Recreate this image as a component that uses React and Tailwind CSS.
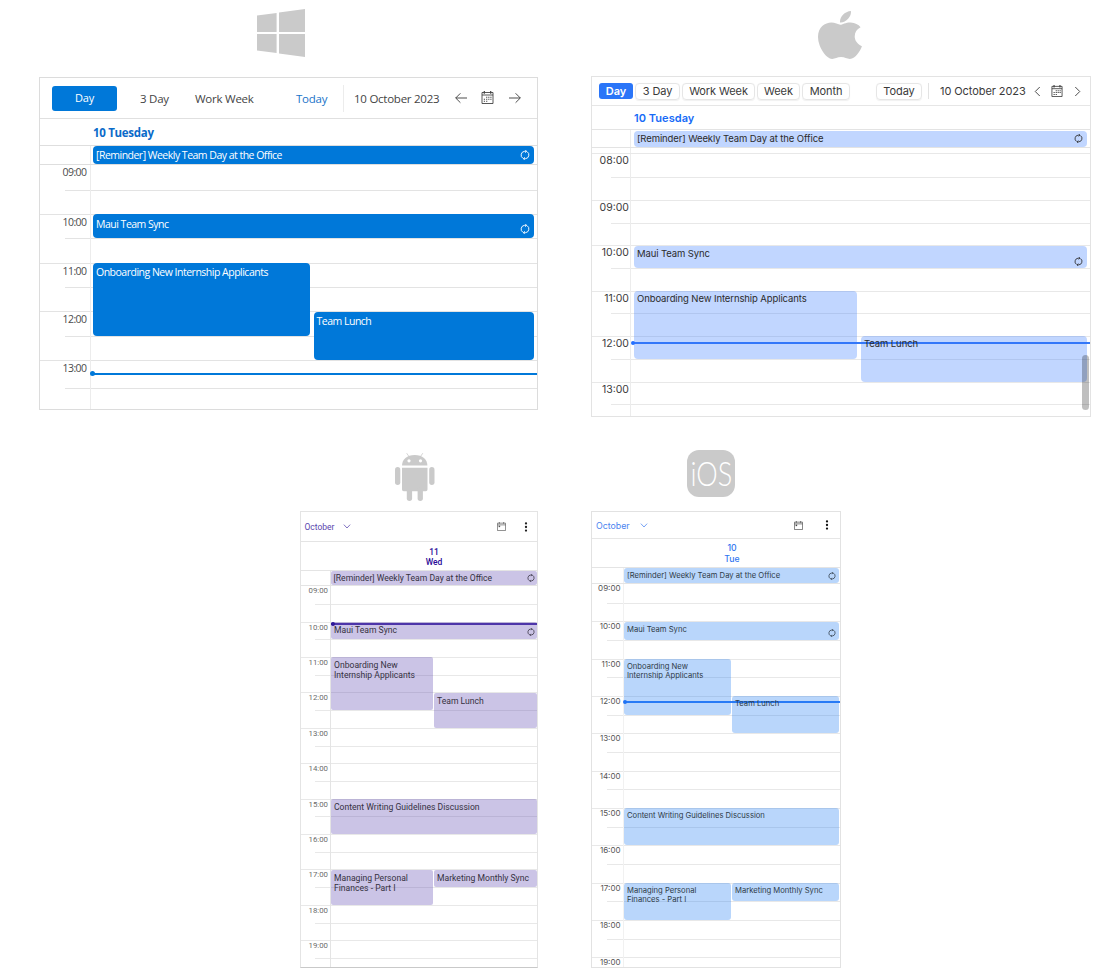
import React from "react";

const REMINDER = "[Reminder] Weekly Team Day at the Office";

function RecurIcon({ className }) {
  return (
    <svg viewBox="0 0 10 10" fill="none" stroke="currentColor" strokeWidth="0.95" className={className}>
      <path d="M2.9 8.3A3.8 3.8 0 0 1 4.6 1.3H6.6M7.1 1.7A3.8 3.8 0 0 1 5.4 8.7H3.4" />
      <path d="M5.2 0L6.6 1.3 5.2 2.7M4.8 10L3.4 8.7 4.8 7.3" />
    </svg>
  );
}

function CalendarIcon({ className }) {
  return (
    <svg viewBox="0 0 12 13" fill="none" stroke="currentColor" className={className}>
      <path d="M.5 1.5h11v11H.5zM.5 4h11" strokeWidth="0.9" />
      <path d="M2.8 0v2.8M9.2 0v2.8" strokeWidth="1.2" />
      <path d="M4.6 6.2h1.2M6.7 6.2h1.2M8.8 6.2H10M2.3 8.2h1.2M4.6 8.2h1.2M6.7 8.2h1.2M8.8 8.2H10M2.3 10.2h1.2M4.6 10.2h1.2" strokeWidth="1.1" />
    </svg>
  );
}

function MonthIcon({ className }) {
  return (
    <svg viewBox="0 0 10 10" fill="none" stroke="currentColor" className={className}>
      <path d="M.5 1.3h9v8.2h-9zM.5 3.2h9" strokeWidth="0.75" />
      <path d="M2.6 0v2M7.4 0v2" strokeWidth="0.8" />
      <path d="M1.8 4h1.7v1.7H1.8z" fill="currentColor" stroke="none" />
    </svg>
  );
}

function Arrow({ className, flip }) {
  return (
    <svg viewBox="0 0 12 12" fill="none" stroke="currentColor" strokeWidth="0.95" className={className}>
      {flip ? <path d="M0 6h11.3M6.6 1.3L11.3 6l-4.7 4.7" /> : <path d="M12 6H.7M5.4 1.3L.7 6l4.7 4.7" />}
    </svg>
  );
}

function Chevron({ className, dir }) {
  const paths = { left: "M7.5 1L2.5 6l5 5", right: "M2.5 1l5 5-5 5", down: "M.8 3.5L5 8l4.2-4.5" };
  return (
    <svg viewBox="0 0 10 12" fill="none" stroke="currentColor" className={className}>
      <path d={paths[dir]} />
    </svg>
  );
}

function Dots({ className }) {
  return (
    <svg viewBox="0 0 4 10" fill="currentColor" className={className}>
      <circle cx="2" cy="1.4" r="1.15" />
      <circle cx="2" cy="5" r="1.15" />
      <circle cx="2" cy="8.6" r="1.15" />
    </svg>
  );
}

function Timeline({ hours, pitch, theme, events, now, lastHalf }) {
  const first = hours[0];
  const y = (h) => (h - first) * pitch;
  return (
    <div className="relative min-h-0 flex-1 overflow-hidden">
      {hours.map((h, i) => {
        const last = i === hours.length - 1;
        return (
          <div key={h} className="flex flex-col" style={{ height: pitch }}>
            <div
              className={`shrink-0 border-t ${i === 0 ? "-mt-px mb-px border-transparent" : theme.line}`}
              style={{ height: last && lastHalf ? lastHalf : pitch / 2 }}
            >
              <div className={theme.time}>{String(h).padStart(2, "0")}:00</div>
            </div>
            <div className={`flex-1 border-t ${theme.line} ${theme.half}`} />
          </div>
        );
      })}
      <div className={`absolute inset-y-0 right-0 border-l ${theme.rule} ${theme.body}`}>
        {now && (
          <div className={`absolute right-0 ${theme.now}`} style={{ top: y(now) - theme.nowSize / 2, height: theme.nowSize }}>
            <span className={theme.dot} />
          </div>
        )}
        {events.map((e) => (
          <div
            key={e.title}
            className={`absolute overflow-hidden ${theme.event} ${e.box}`}
            style={{ top: y(e.from) + 0.3, height: (e.to - e.from) * pitch - 0.3 }}
          >
            <div className={`${theme.title} ${e.text || ""}`}>{e.title}</div>
            {e.recurs && <RecurIcon className={theme.recur} />}
          </div>
        ))}
      </div>
    </div>
  );
}

const windowsTheme = {
  line: "border-[#e3e3e3]",
  rule: "border-[#ececec]",
  half: "ml-[25px]",
  body: "left-[50px]",
  time: "w-[46.5px] text-right text-[10.5px] leading-[14px] tracking-[-0.55px] text-[#4a4a4a]",
  now: "left-0 bg-[#0078d9]",
  nowSize: 2,
  dot: "absolute left-[-1px] top-[-1.5px] size-[5px] rounded-full bg-[#0078d9]",
  event: "rounded-[4px] bg-[#0078d9] text-white",
  title: "whitespace-nowrap pl-[3px] pt-[2.5px] text-[10.5px] leading-[15px] tracking-[-0.5px] font-medium",
  recur: "absolute bottom-[4px] right-[4px] size-[10px]",
};

const macTheme = {
  line: "border-[#e8e8e8]",
  rule: "border-[#ececec]",
  half: "ml-[19px]",
  body: "left-[38px]",
  time: "w-[37px] text-right text-[10.5px] leading-[13.5px] text-[#3c3c3c]",
  now: "left-[2px] bg-[#3478f6]",
  nowSize: 2,
  dot: "absolute left-[-2px] top-[-1px] size-[4px] rounded-full bg-[#2470ff]",
  event: "rounded-[4px] bg-[#3278ff]/30 text-[#2b2b2b]",
  title: "whitespace-nowrap pl-[3px] text-[9.5px] leading-[15px] tracking-[-0.1px]",
  recur: "absolute bottom-[2px] right-[4px] size-[9px]",
};

const androidTheme = {
  line: "border-[#e8e8e8]",
  rule: "border-[#e4e4e4]",
  half: "ml-[14px]",
  body: "left-[29px]",
  time: "w-[27px] text-right text-[7.8px] leading-[10px] text-[#6b6b6b]",
  now: "left-0 bg-[#4b33a8]",
  nowSize: 2,
  dot: "absolute left-0 top-[-1px] size-[4px] rounded-full bg-[#1f0a91]",
  event: "rounded-[2px] bg-[#523aac]/30 text-[#35313f]",
  title: "pl-[3px] pt-[3px] text-[8.6px] leading-[10px]",
  recur: "absolute bottom-[3px] right-[2px] size-[8px]",
};

const iosTheme = {
  line: "border-[#e8e8e8]",
  rule: "border-[#f1f1f1]",
  half: "ml-[15px]",
  body: "left-[31px]",
  time: "w-[28.5px] text-right text-[8px] leading-[9.5px] text-[#555]",
  now: "left-0 bg-[#2f7bf6]",
  nowSize: 2,
  dot: "absolute left-[-1px] top-[-1px] size-[4px] rounded-full bg-[#2272f5]",
  event: "rounded-[3px] bg-[#1676f2]/30 text-[#2f3b48]",
  title: "pl-[3px] pt-[2.9px] text-[7.65px] leading-[9px]",
  recur: "absolute bottom-[3px] right-[3px] size-[8px]",
};

function WindowsScheduler() {
  return (
    <section className="flex h-[333px] w-[499px] flex-col border border-[#dcdcdc] font-['Open_Sans',sans-serif]">
      <header className="flex h-[40px] shrink-0 items-center text-[11.5px] tracking-[-0.25px] text-[#444]">
        <button className="ml-[12px] h-[25px] w-[65px] rounded-[3px] bg-[#0078d9] pt-px text-[11px] font-medium text-white">Day</button>
        <span className="ml-[23px] w-[55px] pt-[1.5px]">3 Day</span>
        <span className="w-[101px] pt-[1.5px]">Work Week</span>
        <span className="w-[47px] pt-[1.5px] text-[#1a73c9]">Today</span>
        <span className="h-[27px] w-px bg-[#ececec]" />
        <span className="ml-[10px] w-[100.5px] whitespace-nowrap pt-[1.5px]">10 October 2023</span>
        <Arrow className="size-[12px]" />
        <CalendarIcon className="mb-[2px] ml-[14px] h-[13px] w-[13px]" />
        <Arrow className="ml-[15px] size-[12px]" flip />
      </header>
      <div className="h-[27px] shrink-0 border-t border-[#e0e0e0] pl-[53px] text-[11.5px] font-bold leading-[28px] tracking-[-0.3px] text-[#0b6bc9]">10 Tuesday</div>
      <div className="flex h-[20.3px] shrink-0 border-y border-[#dedede]">
        <div className="w-[50px]" />
        <div className="flex flex-1 items-center border-l border-[#ececec] pl-[2px] pr-[3px]">
          <div className="flex h-[18px] flex-1 items-center justify-between rounded-[4px] bg-[#0078d9] pl-[3px] pr-[4px] text-white">
            <span className="whitespace-nowrap pt-[2px] text-[10.5px] font-medium tracking-[-0.51px]">{REMINDER}</span>
            <RecurIcon className="size-[10px]" />
          </div>
        </div>
      </div>
      <Timeline
        hours={[9, 10, 11, 12, 13]}
        pitch={48.7}
        lastHalf={28}
        theme={windowsTheme}
        now={13.28}
        events={[
          { title: "Maui Team Sync", from: 10, to: 10.5, box: "left-[2px] right-[3px]", recurs: true },
          { title: "Onboarding New Internship Applicants", from: 11, to: 12.5, box: "left-[2px] w-[217px]" },
          { title: "Team Lunch", from: 12, to: 13, box: "left-[222.5px] right-[3px]" },
        ]}
      />
    </section>
  );
}

function MacScheduler() {
  const tab = "h-[17px] rounded-[4px] border border-[#e6e6e6] pt-px shadow-[0_0.5px_1px_rgba(0,0,0,0.06)]";
  return (
    <section className="relative flex h-[341px] w-[499.5px] flex-col border border-[#e3e3e3] font-[Inter,sans-serif]">
      <header className="flex h-[28px] shrink-0 items-center whitespace-nowrap text-[11px] leading-none tracking-[-0.08px] text-[#3a3a3a]">
        <button className="ml-[7px] h-[16px] w-[34px] rounded-[3px] bg-[#2a75f8] pt-px font-semibold text-white">Day</button>
        <button className={`${tab} ml-[2px] w-[45px]`}>3 Day</button>
        <button className={`${tab} ml-[2px] w-[73px]`}>Work Week</button>
        <button className={`${tab} ml-[2px] w-[43px]`}>Week</button>
        <button className={`${tab} ml-[2px] w-[48px]`}>Month</button>
        <button className={`${tab} ml-[26px] w-[46px]`}>Today</button>
        <span className="ml-[6px] h-[16px] w-px bg-[#e3e3e3]" />
        <span className="ml-[11px] w-[93px] pt-px">10 October 2023</span>
        <Chevron dir="left" className="h-[11px] w-[9px]" />
        <CalendarIcon className="ml-[9px] h-[12px] w-[12px]" />
        <Chevron dir="right" className="ml-[10px] h-[11px] w-[9px]" />
      </header>
      <div className="h-[24px] shrink-0 border-t border-[#e6e6e6] pl-[42px] text-[11px] font-semibold leading-[24px] tracking-[0.05px] text-[#176bf7]">10 Tuesday</div>
      <div className="flex h-[19px] shrink-0 border-y border-[#e3e3e3]">
        <div className="w-[38px]" />
        <div className="flex flex-1 items-center border-l border-[#ececec] pl-[3px] pr-[3px]">
          <div className="flex h-[16px] flex-1 items-center justify-between rounded-[4px] bg-[#c1d6ff] pl-[3px] pr-[4px] text-[#2b2b2b]">
            <span className="whitespace-nowrap pt-px text-[9.5px] tracking-[-0.1px]">{REMINDER}</span>
            <RecurIcon className="size-[9px]" />
          </div>
        </div>
      </div>
      <div className="flex h-[6.4px] shrink-0 border-b border-[#e8e8e8]">
        <div className="w-[38px]" />
        <div className="border-l border-[#ececec]" />
      </div>
      <Timeline
        hours={[8, 9, 10, 11, 12, 13]}
        pitch={45.45}
        theme={macTheme}
        now={12.14}
        events={[
          { title: "Maui Team Sync", from: 10, to: 10.5, box: "left-[3px] right-[3px]", recurs: true },
          { title: "Onboarding New Internship Applicants", from: 11, to: 12.5, box: "left-[3px] w-[223px]" },
          { title: "Team Lunch", from: 12, to: 13, box: "left-[230px] right-[3px]" },
        ]}
      />
      <div className="absolute bottom-[6px] right-px h-[55px] w-[7px] rounded-full bg-black/25" />
    </section>
  );
}

const phoneEvents = (full, left, right) => [
  { title: "Maui Team Sync", from: 10, to: 10.5, box: full, recurs: true },
  { title: "Onboarding New Internship Applicants", from: 11, to: 12.5, box: left, text: "w-[96px]" },
  { title: "Team Lunch", from: 12, to: 13, box: right },
  { title: "Content Writing Guidelines Discussion", from: 15, to: 16, box: full },
  { title: "Managing Personal Finances - Part I", from: 17, to: 18, box: left, text: "w-[92px]" },
  { title: "Marketing Monthly Sync", from: 17, to: 17.5, box: right },
];
const phoneHours = [9, 10, 11, 12, 13, 14, 15, 16, 17, 18, 19];

function AndroidScheduler() {
  return (
    <section className="flex h-[457px] w-[238px] flex-col border border-b-[#c9c9c9] border-l-[#e4e4e4] border-r-[#e4e4e4] border-t-[#e4e4e4] font-[Roboto,sans-serif]">
      <header className="flex h-[29px] shrink-0 items-center text-[8.5px] text-[#5a45ae]">
        <span className="ml-[3.5px] w-[38px] pt-px">October</span>
        <Chevron dir="down" className="h-[9px] w-[8px]" />
        <MonthIcon className="ml-[146.5px] size-[9px] text-[#555]" />
        <Dots className="ml-[18px] h-[10px] w-[4px] text-[#222]" />
      </header>
      <div className="flex h-[29px] shrink-0 flex-col justify-center border-t border-[#e4e4e4] pl-[30px] pt-px text-center text-[8.5px] font-medium leading-[10px] text-[#2b0b98]">
        <span>11</span>
        <span>Wed</span>
      </div>
      <div className="flex h-[16.3px] shrink-0 border-y border-[#e4e4e4]">
        <div className="w-[29px]" />
        <div className="flex flex-1 items-center border-l border-[#e4e4e4] pr-[0.5px]">
          <div className="flex h-[14.5px] flex-1 items-center justify-between rounded-[2px] bg-[#cbc4e6] pl-[2.5px] pr-[2px] text-[#35313f]">
            <span className="whitespace-nowrap pt-[1.5px] text-[8.6px]">{REMINDER}</span>
            <RecurIcon className="size-[8px]" />
          </div>
        </div>
      </div>
      <Timeline
        hours={phoneHours}
        pitch={35.4}
        theme={androidTheme}
        now={10.06}
        events={phoneEvents("left-0 right-[0.5px]", "left-0 w-[102px]", "left-[103px] right-[0.5px]")}
      />
    </section>
  );
}

function IosScheduler() {
  return (
    <section className="flex h-[457px] w-[250px] flex-col border border-[#e2e2e2] font-[Inter,sans-serif]">
      <header className="flex h-[26px] shrink-0 items-center text-[8.8px] text-[#4b84f0]">
        <span className="ml-[4px] w-[44px] pt-[1.5px]">October</span>
        <Chevron dir="down" className="h-[9px] w-[8px]" />
        <MonthIcon className="ml-[146px] size-[9px] text-[#444]" />
        <Dots className="ml-[22px] h-[10px] w-[4px] text-[#111]" />
      </header>
      <div className="flex h-[29px] shrink-0 flex-col justify-center border-t border-[#e6e6e6] pl-[32px] pt-px text-center text-[8.7px] font-medium leading-[11px] text-[#2f76f0]">
        <span>10</span>
        <span>Tue</span>
      </div>
      <div className="flex h-[17px] shrink-0 border-y border-[#e4e4e4]">
        <div className="w-[31px]" />
        <div className="flex flex-1 items-center border-l border-[#f1f1f1] pr-px">
          <div className="flex h-[15px] flex-1 items-center justify-between rounded-[3px] bg-[#b9d6fb] pl-[3px] pr-[3px] text-[#2f3b48]">
            <span className="whitespace-nowrap text-[7.65px]">{REMINDER}</span>
            <RecurIcon className="size-[8px]" />
          </div>
        </div>
      </div>
      <Timeline
        hours={phoneHours}
        pitch={37.35}
        theme={iosTheme}
        now={12.16}
        events={phoneEvents("left-0 right-px", "left-0 w-[106.5px]", "left-[108px] right-px")}
      />
    </section>
  );
}

export default function App() {
  return (
    <main className="h-[977px] w-[1112px] overflow-hidden bg-white">
      <div className="flex h-[450px] gap-[53px] pl-[39px]">
        <div className="flex w-[499px] flex-col pt-[9px]">
          <svg viewBox="0 0 48 48" className="ml-[218px] size-[48px] shrink-0" fill="#cacaca">
            <path d="M0 6.5L19.6 4v19H0zM22 3.6L48 0v23H22zM0 25h19.6v19L0 41.5zM22 25h26v23l-26-3.6z" />
          </svg>
          <div className="mt-[20px]">
            <WindowsScheduler />
          </div>
        </div>
        <div className="flex w-[500px] flex-col pt-[11px]">
          <svg viewBox="4 32 377 448" preserveAspectRatio="none" className="ml-[227px] h-[48px] w-[44px] shrink-0" fill="#cacaca">
            <path d="M318.7 268.7c-.2-36.7 16.4-64.4 50-84.8-18.8-26.9-47.2-41.7-84.7-44.6-35.5-2.8-74.3 20.7-88.5 20.7-15 0-49.4-19.7-76.4-19.7C63.3 141.2 4 184.8 4 273.5q0 39.3 14.4 81.2c12.8 36.7 59 126.7 107.2 125.2 25.2-.6 43-17.9 75.8-17.9 31.8 0 48.3 17.9 76.4 17.9 48.6-.7 90.4-82.5 102.6-119.3-65.2-30.7-61.7-90-61.7-91.9zm-56.6-164.2c27.3-32.4 24.8-61.9 24-72.5-24.1 1.4-52 16.4-67.9 34.9-17.5 19.8-27.8 44.3-25.6 71.9 26.1 2 49.9-11.4 69.5-34.3z" />
          </svg>
          <div className="mt-[17px]">
            <MacScheduler />
          </div>
        </div>
      </div>
      <div className="flex gap-[53px] pl-[300px]">
        <div className="flex w-[238px] flex-col">
          <svg viewBox="0 0 40 48" className="ml-[95px] mt-[3px] h-[48px] w-[40px] shrink-0" fill="#cacaca">
            <path d="M7 12.6C7 6.5 12 2 19.7 2s12.7 4.5 12.7 10.6z" />
            <path d="M11.7.2l3 4.4M27.8.2l-3 4.4" stroke="#cacaca" strokeWidth="0.8" />
            <path d="M7 14.7h25.5v21.7a1.8 1.8 0 0 1-1.8 1.8H8.8A1.8 1.8 0 0 1 7 36.4z" />
            <rect x="0" y="14" width="5.3" height="18" rx="2.65" />
            <rect x="34.2" y="14" width="5.3" height="18" rx="2.65" />
            <rect x="11.8" y="34" width="5.3" height="14" rx="2.65" />
            <rect x="22.6" y="34" width="5.3" height="14" rx="2.65" />
            <circle cx="14" cy="7.8" r="1.6" fill="#fff" />
            <circle cx="25.5" cy="7.8" r="1.6" fill="#fff" />
          </svg>
          <div className="mt-[10px]">
            <AndroidScheduler />
          </div>
        </div>
        <div className="flex w-[250px] flex-col">
          <div className="ml-[96px] flex h-[47px] w-[48px] items-center justify-center rounded-[12px] bg-[#cacaca]">
            <span className="scale-x-[0.82] font-[Lato,sans-serif] text-[33px] font-light leading-none text-white">iOS</span>
          </div>
          <div className="mt-[14px]">
            <IosScheduler />
          </div>
        </div>
      </div>
    </main>
  );
}
